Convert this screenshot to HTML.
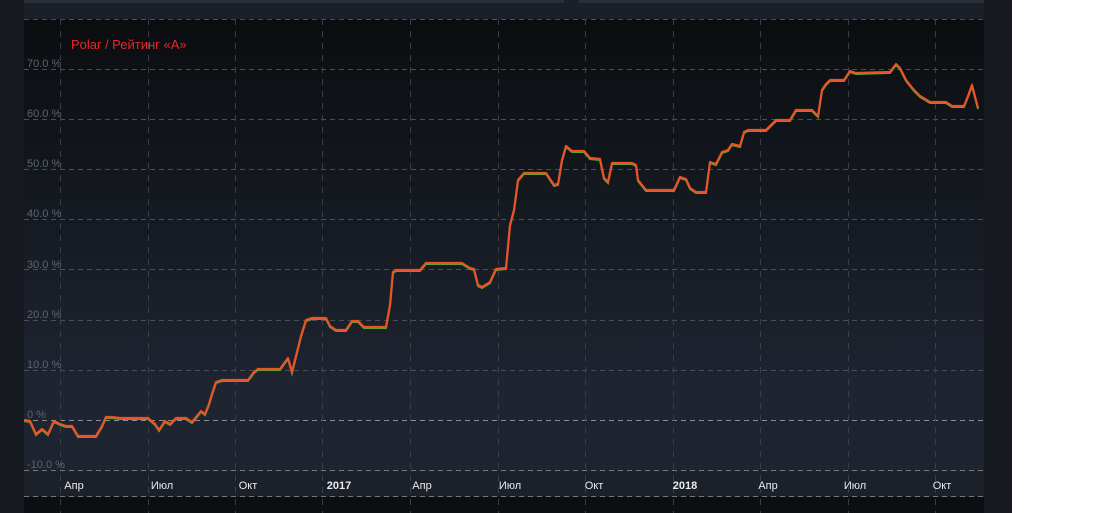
<!DOCTYPE html><html><head><style>
body{margin:0;width:1100px;height:513px;background:#fff;position:relative;overflow:hidden;font-family:"Liberation Sans",sans-serif}
.l{position:absolute;left:0;top:0;width:24px;height:513px;background:#161a20}
.r{position:absolute;left:984px;top:0;width:28px;height:513px;background:#161a20}
.top{position:absolute;left:24px;top:0;width:960px;height:19px;background:#1b2028}
.chart{position:absolute;left:24px;top:19px;width:960px;height:453px;background:linear-gradient(#0b0d10,#1e2430 80%,#1e2330)}
.axis{position:absolute;left:24px;top:472px;width:960px;height:25px;background:#1b2029}
.bot{position:absolute;left:24px;top:497px;width:960px;height:16px;background:#0c0e11}
</style></head><body>
<div class="l"></div><div class="r"></div><div class="top"><div style="position:absolute;left:0;top:0;width:540px;height:3px;background:#2a303a"></div><div style="position:absolute;left:555px;top:0;width:405px;height:3px;background:#2a303a"></div></div>
<div class="chart"></div><div class="axis"></div><div class="bot"></div>
<svg width="1100" height="513" style="position:absolute;left:0;top:0" font-family="Liberation Sans, sans-serif">
<g stroke="#4a4f57" stroke-dasharray="5,4" stroke-width="1">
<line x1="24" y1="19.5" x2="984" y2="19.5"/>
<line x1="24" y1="69.5" x2="984" y2="69.5"/><line x1="24" y1="119.5" x2="984" y2="119.5"/><line x1="24" y1="169.5" x2="984" y2="169.5"/><line x1="24" y1="219.5" x2="984" y2="219.5"/><line x1="24" y1="269.5" x2="984" y2="269.5"/><line x1="24" y1="320.5" x2="984" y2="320.5"/><line x1="24" y1="370.5" x2="984" y2="370.5"/>
<line x1="24" y1="470.5" x2="984" y2="470.5" stroke="#777"/><line x1="24" y1="496.5" x2="984" y2="496.5" stroke="#777"/>
</g>
<line x1="24" y1="420.5" x2="984" y2="420.5" stroke="#8a8f96" stroke-dasharray="5,4"/>
<g stroke="#3a3f47" stroke-dasharray="6,6">
<line x1="60.5" y1="19" x2="60.5" y2="513"/><line x1="148.5" y1="19" x2="148.5" y2="513"/><line x1="235.5" y1="19" x2="235.5" y2="513"/><line x1="322.5" y1="19" x2="322.5" y2="513"/><line x1="410.5" y1="19" x2="410.5" y2="513"/><line x1="498.5" y1="19" x2="498.5" y2="513"/><line x1="585.5" y1="19" x2="585.5" y2="513"/><line x1="673.5" y1="19" x2="673.5" y2="513"/><line x1="760.5" y1="19" x2="760.5" y2="513"/><line x1="848.5" y1="19" x2="848.5" y2="513"/><line x1="935.5" y1="19" x2="935.5" y2="513"/>
</g>
<g fill="#5d646e" font-size="11">
<text x="27" y="67">70.0 %</text><text x="27" y="117">60.0 %</text><text x="27" y="167">50.0 %</text><text x="27" y="217">40.0 %</text><text x="27" y="268">30.0 %</text><text x="27" y="318">20.0 %</text><text x="27" y="368">10.0 %</text><text x="27" y="418">0 %</text><text x="27" y="468">-10.0 %</text>
</g>
<text x="71" y="49" fill="#e8262c" font-size="13">Polar / Рейтинг «А»</text>
<g fill="#e8ebef" font-size="11" text-anchor="middle">
<text x="74" y="489">Апр</text><text x="162" y="489">Июл</text><text x="248" y="489">Окт</text><text x="339" y="489" font-weight="bold">2017</text><text x="422" y="489">Апр</text><text x="510" y="489">Июл</text><text x="594" y="489">Окт</text><text x="685" y="489" font-weight="bold">2018</text><text x="768" y="489">Апр</text><text x="855" y="489">Июл</text><text x="942" y="489">Окт</text>
</g>
<polyline fill="none" stroke="#58a832" stroke-width="2" transform="translate(0,1)" points="24,420 30,421 36,434 42,429 48,434 54,421 60,424 66,426 72,426 78,436 84,436 96,436 102,426 106,417 112,417 120,418 148,418 155,424 159,430 165,421 170,424 176,418 186,418 192,422 197,416 201,411 205,414 209,404 212,394 216,382 222,380 248,380 254,372 258,369 280,369 285,362 288,358 292,372 296,356 301,336 306,320 312,318 326,318 330,326 336,330 346,330 352,321 358,321 364,327 386,327 390,305 393,272 396,270 420,270 426,263 462,263 470,268 474,269 478,285 482,287 490,282 496,269 506,268 510,225 514,210 518,180 524,173 546,173 554,185 558,184 562,160 566,146 572,151 584,151 590,158 600,159 604,178 608,182 612,163 632,163 636,165 638,180 646,190 674,190 680,177 686,179 690,188 696,192 706,192 710,162 716,164 722,152 728,150 732,144 740,146 744,132 748,130 766,130 772,124 776,120 790,120 796,110 812,110 818,116 822,90 826,84 830,80 844,80 850,71 856,73 890,72 896,64 900,68 906,80 914,90 920,96 930,102 946,102 952,106 964,106 968,96 972,85 978,108"/>
<polyline fill="none" stroke="#ec5228" stroke-width="2.2" stroke-linejoin="round" points="24,420 30,421 36,434 42,429 48,434 54,421 60,424 66,426 72,426 78,436 84,436 96,436 102,426 106,417 112,417 120,418 148,418 155,424 159,430 165,421 170,424 176,418 186,418 192,422 197,416 201,411 205,414 209,404 212,394 216,382 222,380 248,380 254,372 258,369 280,369 285,362 288,358 292,372 296,356 301,336 306,320 312,318 326,318 330,326 336,330 346,330 352,321 358,321 364,327 386,327 390,305 393,272 396,270 420,270 426,263 462,263 470,268 474,269 478,285 482,287 490,282 496,269 506,268 510,225 514,210 518,180 524,173 546,173 554,185 558,184 562,160 566,146 572,151 584,151 590,158 600,159 604,178 608,182 612,163 632,163 636,165 638,180 646,190 674,190 680,177 686,179 690,188 696,192 706,192 710,162 716,164 722,152 728,150 732,144 740,146 744,132 748,130 766,130 772,124 776,120 790,120 796,110 812,110 818,116 822,90 826,84 830,80 844,80 850,71 856,73 890,72 896,64 900,68 906,80 914,90 920,96 930,102 946,102 952,106 964,106 968,96 972,85 978,108"/>
</svg>
</body></html>
